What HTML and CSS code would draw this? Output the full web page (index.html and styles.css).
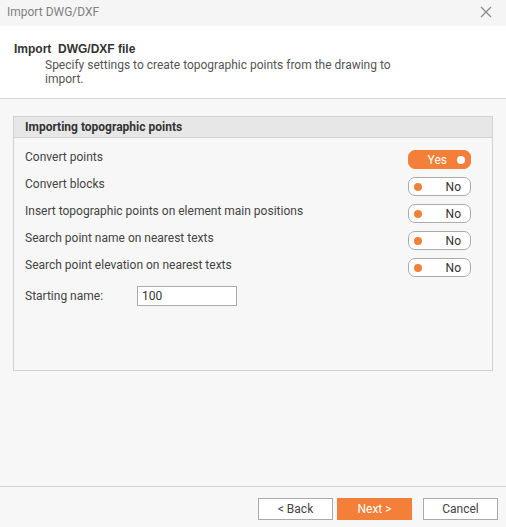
FILE: index.html
```html
<!DOCTYPE html>
<html>
<head>
<meta charset="utf-8">
<link rel="stylesheet" href="styles.css">
</head>
<body>
<div class="dialog">
  <div class="titlebar">
    <span class="title">Import DWG/DXF</span>
    <svg class="close" width="12" height="12" viewBox="0 0 12 12"><path d="M1 1L11 11M11 1L1 11" stroke="#8a8a8a" stroke-width="1.3" fill="none"/></svg>
  </div>
  <div class="header">
    <div class="h-title">Import&nbsp; DWG/DXF file</div>
    <div class="h-sub">Specify settings to create topographic points from the drawing to import.</div>
  </div>
  <div class="main">
    <div class="group">
      <div class="group-head">Importing topographic points</div>
      <div class="group-body">
        <div class="row">
          <span class="label">Convert points</span>
          <span class="toggle on"><span class="ttext">Yes</span><span class="dot"></span></span>
        </div>
        <div class="row">
          <span class="label">Convert blocks</span>
          <span class="toggle"><span class="dot"></span><span class="ttext">No</span></span>
        </div>
        <div class="row">
          <span class="label">Insert topographic points on element main positions</span>
          <span class="toggle"><span class="dot"></span><span class="ttext">No</span></span>
        </div>
        <div class="row">
          <span class="label">Search point name on nearest texts</span>
          <span class="toggle"><span class="dot"></span><span class="ttext">No</span></span>
        </div>
        <div class="row">
          <span class="label">Search point elevation on nearest texts</span>
          <span class="toggle"><span class="dot"></span><span class="ttext">No</span></span>
        </div>
        <div class="row-input">
          <span class="label name-label">Starting name:</span>
          <span class="input">100</span>
        </div>
      </div>
    </div>
  </div>
  <div class="footer">
    <button class="btn">&lt; Back</button>
    <button class="btn primary">Next &gt;</button>
    <button class="btn cancel">Cancel</button>
  </div>
</div>
</body>
</html>
```

FILE: styles.css
```css
* { box-sizing: border-box; }
html, body { margin: 0; padding: 0; }
body {
  font-family: Roboto, "Liberation Sans", sans-serif;
  font-size: 12px;
  color: #444;
  background: #f7f7f7;
}
.dialog {
  width: 506px;
  height: 527px;
  display: flex;
  flex-direction: column;
  background: #f7f7f7;
}
.titlebar {
  height: 26px;
  background: #f5f5f5;
  display: flex;
  align-items: center;
  justify-content: space-between;
  padding: 0 14px 0 7px;
}
.title {
  color: #808080;
  font-size: 12px;
  line-height: 14px;
  margin-top: -3px;
}
.close { margin-top: -3px; }
.header {
  height: 73px;
  background: #fff;
  border-bottom: 1px solid #d4d4d4;
  padding: 16px 0 0 14px;
}
.h-title {
  font-family: "Liberation Sans", Arial, sans-serif;
  font-weight: bold;
  font-size: 12px;
  line-height: 14px;
  color: #333;
}
.h-sub {
  margin-left: 31px;
  width: 360px;
  line-height: 14px;
  color: #555;
  margin-top: 2px;
}
.main {
  flex: 1;
  padding: 17px 13px 0 13px;
}
.group {
  height: 255px;
  border: 1px solid #d2d2d2;
  background: #f7f7f7;
}
.group-head {
  height: 21px;
  background: #e7e7e7;
  border-bottom: 1px solid #d2d2d2;
  padding-left: 11px;
  font-weight: bold;
  color: #333;
  line-height: 20px;
}
.group-body {
  padding: 12px 21px 0 11px;
  display: flex;
  flex-direction: column;
  gap: 8px;
}
.row {
  display: flex;
  justify-content: space-between;
  align-items: flex-start;
}
.label {
  line-height: 14px;
  color: #444;
}
.toggle {
  width: 63px;
  height: 19px;
  border: 1px solid #ababab;
  border-radius: 7px;
  background: #fff;
  display: flex;
  align-items: center;
  justify-content: space-between;
  padding: 0 9px 0 5px;
  color: #333;
  line-height: 14px;
}
.toggle.on {
  background: #f47f38;
  border-color: #f47f38;
  color: #fff;
  justify-content: flex-end;
  gap: 10px;
  padding: 0 5px 0 0;
}
.dot {
  width: 8px;
  height: 8px;
  border-radius: 50%;
  background: #f47f38;
}
.toggle.on .dot { background: #fff; }
.row-input {
  display: flex;
  align-items: center;
  margin-top: 1px;
}
.name-label { width: 112px; }
.input {
  width: 100px;
  height: 20px;
  border: 1px solid #aaa;
  background: #fff;
  padding-left: 4px;
  line-height: 18px;
  color: #333;
}
.footer {
  height: 41px;
  border-top: 1px solid #d2d2d2;
  display: flex;
  justify-content: flex-end;
  align-items: flex-start;
  padding: 11px 8px 0 0;
}
.btn {
  width: 75px;
  height: 22px;
  border: 1px solid #aaa;
  background: #fff;
  font-family: Roboto, "Liberation Sans", sans-serif;
  font-size: 12px;
  color: #444;
  padding: 0;
  margin-left: 4px;
}
.btn.primary {
  background: #f47f38;
  border-color: #f47f38;
  color: #fff;
}
.btn.cancel { margin-left: 11px; }
```
